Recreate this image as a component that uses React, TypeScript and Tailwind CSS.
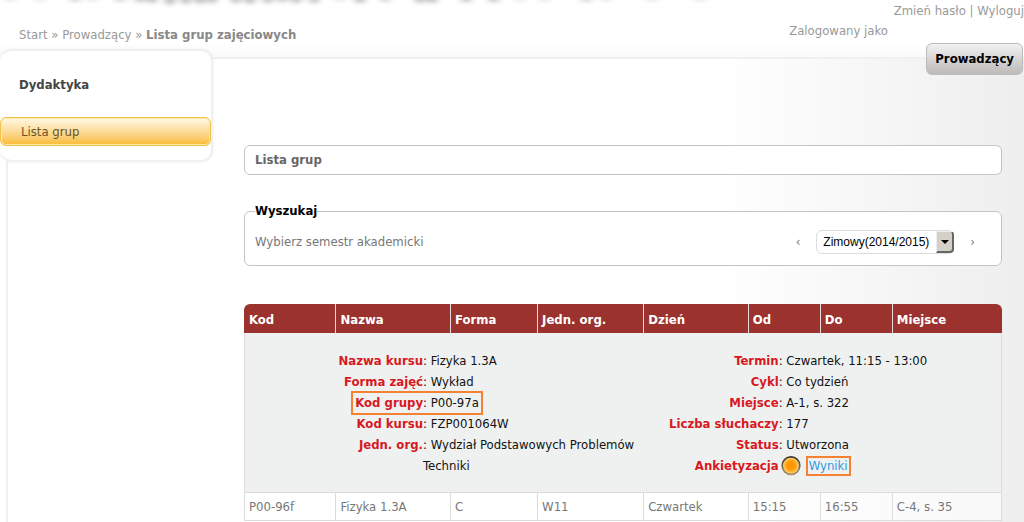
import type { ReactNode } from "react";

const columns = [
  { name: "Kod", width: "w-[12.2%]" },
  { name: "Nazwa", width: "w-[15.1%]" },
  { name: "Forma", width: "w-[11.5%]" },
  { name: "Jedn. org.", width: "w-[14%]" },
  { name: "Dzień", width: "w-[13.8%]" },
  { name: "Od", width: "w-[9.5%]" },
  { name: "Do", width: "w-[9.5%]" },
  { name: "Miejsce", width: "w-[14.4%]" },
];

const row = ["P00-96f", "Fizyka 1.3A", "C", "W11", "Czwartek", "15:15", "16:55", "C-4, s. 35"];

const course = [
  { label: "Nazwa kursu", value: "Fizyka 1.3A" },
  { label: "Forma zajęć", value: "Wykład" },
  { label: "Kod grupy", value: "P00-97a", marked: true },
  { label: "Kod kursu", value: "FZP001064W" },
  { label: "Jedn. org.", value: "Wydział Podstawowych Problemów Techniki" },
];

const schedule = [
  { label: "Termin", value: "Czwartek, 11:15 - 13:00" },
  { label: "Cykl", value: "Co tydzień" },
  { label: "Miejsce", value: "A-1, s. 322" },
  { label: "Liczba słuchaczy", value: "177" },
  { label: "Status", value: "Utworzona" },
];

function Detail({ label, marked, children }: { label: string; marked?: boolean; children: ReactNode }) {
  return (
    <>
      <dt className="text-right font-bold text-[#d7191f]">
        {marked ? (
          <span className="relative">
            {label}
            <span className="pointer-events-none absolute -top-1 -left-1 h-6 w-[132px] border-2 border-[#f58233]" />
          </span>
        ) : (
          label
        )}
      </dt>
      <dd>{children}</dd>
    </>
  );
}

function BannerShadow() {
  const blots = [
    [10, 1], [40, 1], [75, 2], [92, 1], [120, 2], [140, 3], [152, 4], [170, 6], [186, 5],
    [200, 5], [212, 4], [236, 4], [250, 5], [268, 4], [282, 3], [296, 4], [314, 4],
    [340, 1], [360, 4], [385, 2], [420, 4], [432, 4], [466, 3], [494, 3],
    [520, 1], [545, 1], [586, 2], [606, 1], [652, 1], [700, 1],
  ];
  return (
    <svg aria-hidden="true" className="pointer-events-none absolute top-0 left-0 h-4 w-[720px]" viewBox="0 0 720 16">
      <filter id="soft" filterUnits="userSpaceOnUse" x="-10" y="-20" width="740" height="50">
        <feGaussianBlur stdDeviation="3 2" />
      </filter>
      <g filter="url(#soft)" fill="#777" opacity="0.45">
        {blots.map(([x, r]) => (
          <ellipse key={x} cx={x} cy={-1} rx={6} ry={r} />
        ))}
      </g>
    </svg>
  );
}

function StatusLight() {
  return (
    <svg aria-hidden="true" className="size-5 shrink-0" viewBox="0 0 20 20">
      <defs>
        <radialGradient id="amber" cx="0.5" cy="0.5" r="0.5">
          <stop offset="0" stopColor="#ff9100" />
          <stop offset="0.55" stopColor="#ff9c0c" />
          <stop offset="0.8" stopColor="#ffb838" />
          <stop offset="1" stopColor="#ffd98a" />
        </radialGradient>
        <linearGradient id="rim" x1="0" y1="0" x2="0" y2="1">
          <stop offset="0" stopColor="#3a3222" />
          <stop offset="1" stopColor="#a8946a" />
        </linearGradient>
      </defs>
      <circle cx="10" cy="9.6" r="9.6" fill="url(#rim)" />
      <circle cx="10" cy="9.6" r="7.9" fill="url(#amber)" />
    </svg>
  );
}

export default function App() {
  return (
    <div className="relative flex min-h-screen flex-col overflow-hidden bg-white font-['DejaVu_Sans_Condensed','DejaVu_Sans',sans-serif] text-[13px] leading-5 text-[#777]">
      <BannerShadow />
      <header className="flex h-[57px] justify-between bg-linear-to-b from-white from-75% to-[#fafafa] pt-px text-[#999]">
        <nav aria-label="Okruszki" className="pt-6 pl-[19px]">
          <a href="#start">Start</a> » <a href="#prowadzacy">Prowadzący</a> »{" "}
          <strong className="text-[#888]">Lista grup zajęciowych</strong>
        </nav>
        <div className="text-right">
          <div>
            <a href="#haslo">Zmień hasło</a> | <a href="#wyloguj">Wyloguj</a>
          </div>
          <div className="pr-34">Zalogowany jako</div>
        </div>
      </header>

      <div className="ml-1.5 flex flex-1 items-start border-t-2 border-l-2 border-[#f0f0f0] bg-linear-to-r from-white from-70% to-[#eeeeee]">
        <aside className="-mt-2.5 -ml-2 w-[213px] shrink-0 rounded-xl border-2 border-l-0 border-[#f0f0f0] bg-white pb-3.5 shadow-[0_0_3px_#eee]">
          <h2 className="px-[19px] pt-6 pb-5.5 font-bold text-[#444]">Dydaktyka</h2>
          <a
            href="#lista"
            className="block rounded-md border border-[#efc248] bg-linear-to-b from-[#fff8e6] to-[#f9bc2a] px-5 pt-1 pb-[3px] text-[#66552a] shadow-[inset_0_0_0_1px_#ffe9a8]"
          >
            Lista grup
          </a>
        </aside>

        <div className="flex min-w-0 flex-1 flex-col">
          <button
            type="button"
            className="-mt-4 mr-px self-end rounded-md border border-[#bcbcbc] bg-linear-to-b from-[#f2f2f2] to-[#bdbab8] px-2 py-[5px] font-bold text-black"
          >
            Prowadzący
          </button>

          <main className="mt-[70px] mr-[22px] ml-[31px]">
            <h1 className="rounded-md border border-[#c4c4c4] bg-white px-2.5 py-1 font-bold text-[#666]">Lista grup</h1>

            <fieldset className="mt-[26px] rounded-md border border-[#c4c4c4] bg-white px-2.5 pt-[9px] pb-[11px]">
              <legend className="font-bold text-black">Wyszukaj</legend>
              <div className="flex items-center">
                <label htmlFor="semester" className="mr-auto">
                  Wybierz semestr akademicki
                </label>
                <button type="button" aria-label="Poprzedni semestr" className="px-4">
                  ‹
                </button>
                <div className="relative">
                  <select
                    id="semester"
                    className="block h-6 w-[138px] appearance-none rounded-md border border-[#ddd] bg-white pl-1.5 font-['Liberation_Sans',sans-serif] text-[12px] text-black"
                  >
                    <option>Zimowy(2014/2015)</option>
                  </select>
                  <span className="pointer-events-none absolute top-px right-0 flex h-[22px] w-[18px] items-center justify-center rounded-r-sm border-t border-r-2 border-b-2 border-l border-t-[#eee] border-r-[#666] border-b-[#666] border-l-[#eee] bg-[#d4d0c8]">
                    <svg aria-hidden="true" className="h-1 w-2" viewBox="0 0 8 4">
                      <path d="M0 0h8L4 4z" fill="#000" />
                    </svg>
                  </span>
                </div>
                <button type="button" aria-label="Następny semestr" className="px-4">
                  ›
                </button>
              </div>
            </fieldset>

            <table className="mt-[38px] w-full table-fixed border-separate border-spacing-0 text-left">
              <thead>
                <tr>
                  {columns.map((c) => (
                    <th
                      key={c.name}
                      className={`${c.width} border-r border-[#e8dada] bg-[#9b322d] px-1 pt-1.5 pb-[3px] font-bold text-white first:rounded-tl-md first:pl-[5px] last:rounded-tr-md last:border-r-0`}
                    >
                      {c.name}
                    </th>
                  ))}
                </tr>
              </thead>
              <tbody>
                <tr>
                  <td colSpan={8} className="border border-t-0 border-[#dcdcdc] bg-[#eff1f1] pt-[17px] pb-4 leading-[21px] text-[#111]">
                    <div className="flex">
                      <dl className="grid w-[53%] grid-cols-[178px_1fr] content-start">
                        {course.map((d) => (
                          <Detail key={d.label} label={d.label} marked={d.marked}>
                            : {d.value}
                          </Detail>
                        ))}
                      </dl>
                      <dl className="grid w-[47%] grid-cols-[133px_1fr] content-start">
                        {schedule.map((d) => (
                          <Detail key={d.label} label={d.label}>
                            : {d.value}
                          </Detail>
                        ))}
                        <Detail label="Ankietyzacja">
                          <span className="flex h-[21px] items-center gap-[5px] pl-0.5">
                            <StatusLight />
                            <a href="#wyniki" className="border-2 border-[#f58233] px-px leading-4 text-[#2f9be6]">
                              Wyniki
                            </a>
                          </span>
                        </Detail>
                      </dl>
                    </div>
                  </td>
                </tr>
                <tr>
                  {row.map((cell) => (
                    <td
                      key={cell}
                      className="border-r border-b border-[#dcdcdc] bg-white/60 px-1 pt-1 pb-[3px] first:border-l"
                    >
                      {cell}
                    </td>
                  ))}
                </tr>
              </tbody>
            </table>
          </main>
        </div>
      </div>
    </div>
  );
}
